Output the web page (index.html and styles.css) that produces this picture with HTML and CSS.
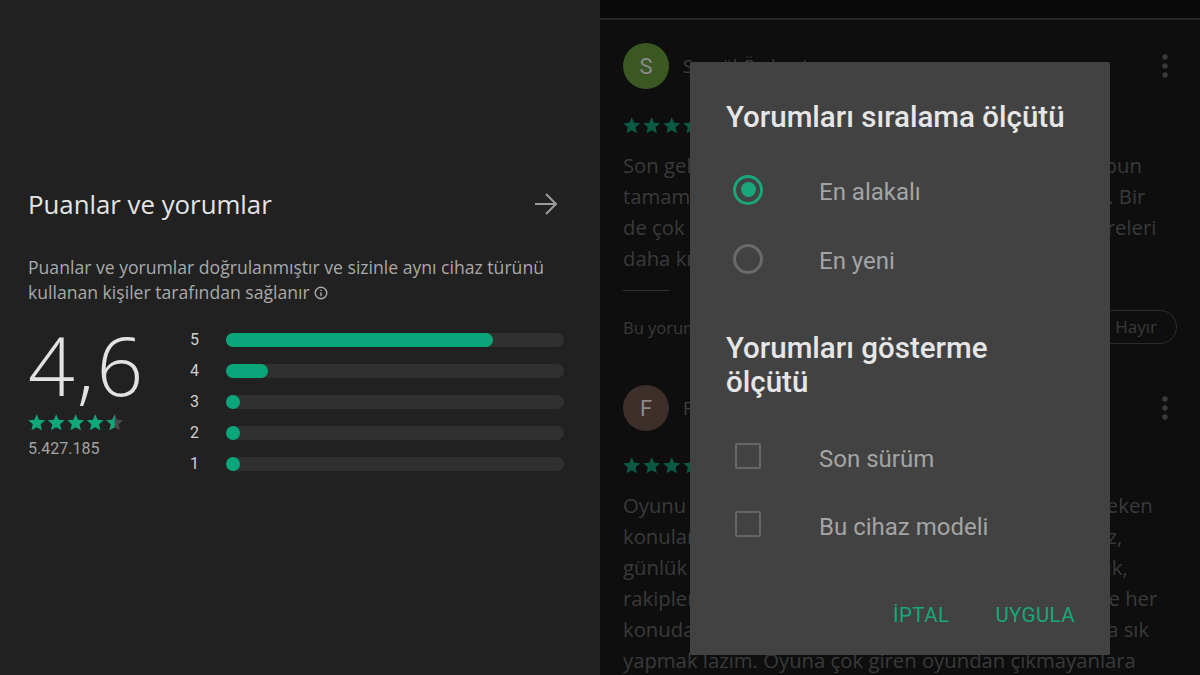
FILE: index.html
```html
<!DOCTYPE html>
<html lang="tr">
<head>
    <meta charset="UTF-8">
    <meta name="viewport" content="width=device-width, initial-scale=1.0">
    <title>Puanlar ve yorumlar</title>
    <link rel="stylesheet" href="styles.css">
</head>
<body>

<svg width="0" height="0" class="defs">
    <defs>
        <path id="star" d="M12 17.27L18.18 21l-1.64-7.03L22 9.24l-7.19-.61L12 2 9.19 8.63 2 9.24l5.46 4.73L5.82 21z"/>
        <clipPath id="half"><rect x="0" y="0" width="12" height="24"/></clipPath>
    </defs>
</svg>

<div class="screen">
    <section class="ratings">
        <div class="ratings-head">
            <h2>Puanlar ve yorumlar</h2>
            <svg class="arrow" viewBox="0 0 24 24"><path d="M1 12h21M12 2l10 10-10 10"/></svg>
        </div>
        <p class="ratings-note">Puanlar ve yorumlar doğrulanmıştır ve sizinle aynı cihaz türünü kullanan kişiler tarafından sağlanır <svg class="info" viewBox="0 0 14 14"><circle cx="7" cy="7" r="5.8"/><path d="M7 6.2v4M7 3.8v1.2"/></svg></p>

        <div class="summary">
            <div class="score">
                <div class="score-value">4,6</div>
                <svg class="score-stars" viewBox="0 0 96 19">
                    <use href="#star" transform="translate(-1.5 -1.5) scale(0.85)"/>
                    <use href="#star" transform="translate(18 -1.5) scale(0.85)"/>
                    <use href="#star" transform="translate(37.5 -1.5) scale(0.85)"/>
                    <use href="#star" transform="translate(57 -1.5) scale(0.85)"/>
                    <use href="#star" class="star-off" transform="translate(76.5 -1.5) scale(0.85)"/>
                    <use href="#star" clip-path="url(#half)" transform="translate(76.5 -1.5) scale(0.85)"/>
                </svg>
                <div class="score-count">5.427.185</div>
            </div>
            <div class="bars">
                <div class="bar-row"><span>5</span><div class="track"><div class="fill" style="width: 79%"></div></div></div>
                <div class="bar-row"><span>4</span><div class="track"><div class="fill" style="width: 12.5%"></div></div></div>
                <div class="bar-row"><span>3</span><div class="track"><div class="fill" style="width: 2%"></div></div></div>
                <div class="bar-row"><span>2</span><div class="track"><div class="fill" style="width: 2%"></div></div></div>
                <div class="bar-row"><span>1</span><div class="track"><div class="fill" style="width: 2%"></div></div></div>
            </div>
        </div>
    </section>

    <section class="reviews">
        <div class="topbar"></div>

        <article class="review">
            <div class="review-head">
                <div class="avatar avatar-green">S</div>
                <div class="reviewer">Sevgül Özdemir</div>
                <svg class="kebab" viewBox="0 0 8 26"><circle cx="4" cy="4" r="2.7"/><circle cx="4" cy="13" r="2.7"/><circle cx="4" cy="22" r="2.7"/></svg>
            </div>
            <svg class="review-stars" viewBox="0 0 100 19">
                <use href="#star" transform="translate(-1.5 -1.5) scale(0.85)"/>
                <use href="#star" transform="translate(18.5 -1.5) scale(0.85)"/>
                <use href="#star" transform="translate(38.5 -1.5) scale(0.85)"/>
                <use href="#star" transform="translate(58.5 -1.5) scale(0.85)"/>
                <use href="#star" transform="translate(78.5 -1.5) scale(0.85)"/>
            </svg>
            <div class="review-text">
                <div>Son gelen güncelleme ile birlikte artık oyunda da topun</div>
                <div>tamamen oyuncunun kontrolünde olması çok güzel. Bir</div>
                <div>de çok güzel olurdu eğer maçların arası bekleme süreleri</div>
                <div>daha kısa olsaydı.</div>
            </div>
            <div class="rule"></div>
            <div class="helpful">
                <span>Bu yorum faydalı oldu mu?</span>
                <div class="pills">
                    <span class="pill">Evet</span>
                    <span class="pill">Hayır</span>
                </div>
            </div>
        </article>

        <article class="review">
            <div class="review-head">
                <div class="avatar avatar-brown">F</div>
                <div class="reviewer">Furkan Yıldız</div>
                <svg class="kebab" viewBox="0 0 8 26"><circle cx="4" cy="4" r="2.7"/><circle cx="4" cy="13" r="2.7"/><circle cx="4" cy="22" r="2.7"/></svg>
            </div>
            <svg class="review-stars" viewBox="0 0 100 19">
                <use href="#star" transform="translate(-1.5 -1.5) scale(0.85)"/>
                <use href="#star" transform="translate(18.5 -1.5) scale(0.85)"/>
                <use href="#star" transform="translate(38.5 -1.5) scale(0.85)"/>
                <use href="#star" transform="translate(58.5 -1.5) scale(0.85)"/>
                <use href="#star" transform="translate(78.5 -1.5) scale(0.85)"/>
            </svg>
            <div class="review-text">
                <div>Oyunu uzun süredir oynuyorum ve düzeltilmesi gereken</div>
                <div>konular var. Bağlantılar sık sık kopuyor, yine hepimiz,</div>
                <div>günlük ödüller de çok az geliyor. Bunun yanında artık,</div>
                <div>rakiplerle eşleşme sistemi de doğru değil. Neredeyse her</div>
                <div>konuda ayrı bir sorun var. Güncellemeleri biraz daha sık</div>
                <div>yapmak lazım. Oyuna çok giren oyundan çıkmayanlara</div>
            </div>
        </article>

        <div class="dialog">
            <h3>Yorumları sıralama ölçütü</h3>
            <div class="options">
                <div class="option">
                    <span class="control"><span class="radio radio-on"></span></span>
                    <span class="option-label">En alakalı</span>
                </div>
                <div class="option">
                    <span class="control"><span class="radio"></span></span>
                    <span class="option-label">En yeni</span>
                </div>
            </div>

            <h3 class="second">Yorumları gösterme<br>ölçütü</h3>
            <div class="options checks">
                <div class="option">
                    <span class="control"><span class="checkbox"></span></span>
                    <span class="option-label">Son sürüm</span>
                </div>
                <div class="option">
                    <span class="control"><span class="checkbox"></span></span>
                    <span class="option-label">Bu cihaz modeli</span>
                </div>
            </div>

            <div class="actions">
                <button type="button">İPTAL</button>
                <button type="button">UYGULA</button>
            </div>
        </div>
    </section>
</div>

</body>
</html>
```

FILE: styles.css
```css
body {
    margin: 0;
    padding: 0;
    font-family: "Open Sans", "Liberation Sans", sans-serif;
    background-color: #0e0e0e;
}
.defs {
    position: absolute;
}
.screen {
    display: flex;
    width: 1200px;
    height: 675px;
    overflow: hidden;
}

/* left: ratings summary */
.ratings {
    width: 600px;
    box-sizing: border-box;
    padding: 188px 36px 0 28px;
    background-color: #212121;
}
.ratings-head {
    display: flex;
    align-items: center;
    justify-content: space-between;
}
.ratings-head h2 {
    margin: 0;
    font-size: 25.8px;
    line-height: 32px;
    font-weight: 400;
    color: #e4e4e4;
}
.arrow {
    width: 24px;
    height: 24px;
    margin-right: 6px;
    fill: none;
    stroke: #9c9c9c;
    stroke-width: 2;
}
.ratings-note {
    margin: 35px 0 0;
    font-size: 17.6px;
    line-height: 25px;
    color: #a9a9a9;
}
.info {
    width: 14px;
    height: 14px;
    vertical-align: -1px;
    fill: none;
    stroke: #a9a9a9;
    stroke-width: 1.4;
}
.summary {
    display: flex;
    margin-top: 19px;
}
.score {
    width: 162px;
    flex-shrink: 0;
}
.score-value {
    font-size: 82px;
    line-height: 82px;
    font-weight: 300;
    letter-spacing: 2px;
    color: #e2e2e2;
    margin: -1px 0 0 0;
}
.score-stars {
    display: block;
    width: 96px;
    height: 19px;
    margin-top: 9px;
    fill: #10a77b;
}
.score-stars .star-off {
    fill: #4a4a4a;
}
.score-count {
    margin-top: 6px;
    font-family: Roboto, sans-serif;
    font-size: 16px;
    line-height: 20px;
    color: #a3a3a3;
}
.bars {
    flex: 1;
}
.bar-row {
    display: flex;
    align-items: center;
    height: 31px;
}
.bar-row span {
    width: 36px;
    font-family: Roboto, sans-serif;
    font-size: 16px;
    color: #cfcfcf;
}
.track {
    flex: 1;
    height: 14px;
    border-radius: 7px;
    background-color: #303030;
}
.fill {
    height: 14px;
    min-width: 14px;
    border-radius: 7px;
    background-color: #0aa57a;
}

/* right: reviews, dimmed behind the dialog */
.reviews {
    position: relative;
    width: 600px;
    box-sizing: border-box;
    padding: 0 31px 0 23px;
    background-color: #0e0e0e;
    color: #3a3a3a;
}
.topbar {
    height: 18px;
    margin: 0 -31px 0 -23px;
    background-color: #0a0a0a;
    border-bottom: 2px solid #262626;
}
.review-head {
    display: flex;
    align-items: center;
    margin-top: 23px;
}
.avatar {
    width: 46px;
    height: 46px;
    border-radius: 50%;
    display: flex;
    align-items: center;
    justify-content: center;
    font-family: Roboto, sans-serif;
    font-size: 22px;
    color: #8a8a8a;
}
.avatar-green {
    background-color: #3b5722;
}
.avatar-brown {
    background-color: #3d2f2a;
}
.reviewer {
    margin-left: 14px;
    font-size: 18px;
    color: #3f3f3f;
}
.kebab {
    width: 8px;
    height: 26px;
    margin-left: auto;
    fill: #3a3a3a;
}
.review-stars {
    display: block;
    width: 100px;
    height: 19px;
    margin-top: 28px;
    fill: #0a5a43;
}
.review-text {
    margin-top: 14px;
    font-size: 20.3px;
    line-height: 31px;
    white-space: nowrap;
}
.rule {
    width: 46px;
    height: 1px;
    margin-top: 16px;
    background-color: #333;
}
.helpful {
    display: flex;
    align-items: center;
    justify-content: space-between;
    margin: 19px -8px 0 0;
    font-size: 16.5px;
}
.pills {
    display: flex;
    gap: 12px;
}
.pill {
    height: 32px;
    line-height: 32px;
    padding: 0 19px;
    border: 1px solid #2d2d2d;
    border-radius: 17px;
    font-size: 17px;
}
.review + .review .review-head {
    margin-top: 41px;
}
.review + .review .review-stars {
    margin-top: 26px;
}

/* sort dialog */
.dialog {
    position: absolute;
    left: 90px;
    top: 62px;
    width: 420px;
    height: 593px;
    box-sizing: border-box;
    padding: 38px 30px 0 36px;
    background-color: #424242;
    border-radius: 2px;
    color: #e6e6e6;
    font-family: Roboto, "Liberation Sans", sans-serif;
}
.dialog h3 {
    margin: 0;
    font-size: 29.5px;
    line-height: 34px;
    font-weight: 500;
}
.dialog h3.second {
    margin-top: 38px;
}
.options {
    margin-top: 21px;
}
.options.checks {
    margin-top: 23px;
}
.option {
    display: flex;
    align-items: center;
    height: 69px;
}
.checks .option {
    height: 68px;
}
.control {
    width: 44px;
    display: flex;
    justify-content: center;
}
.radio {
    width: 24px;
    height: 24px;
    border: 3px solid #6a6a6a;
    border-radius: 50%;
    position: relative;
}
.radio-on {
    border-color: #17a77b;
}
.radio-on::after {
    content: "";
    position: absolute;
    left: 4.5px;
    top: 4.5px;
    width: 15px;
    height: 15px;
    border-radius: 50%;
    background-color: #17a77b;
}
.checkbox {
    width: 22px;
    height: 22px;
    border: 2px solid #666;
    border-radius: 2px;
}
.option-label {
    margin-left: 49px;
    padding-top: 5px;
    font-size: 24px;
    color: #a4a4a4;
}
.actions {
    display: flex;
    justify-content: flex-end;
    gap: 30px;
    margin: 37px 5px 0 0;
}
.actions button {
    height: 40px;
    padding: 0 8px;
    border: none;
    background: none;
    font-family: Roboto, "Liberation Sans", sans-serif;
    font-size: 20.5px;
    letter-spacing: 0.4px;
    color: #18a67b;
    cursor: pointer;
}
.actions button:last-child {
    margin-right: -8px;
}
```
